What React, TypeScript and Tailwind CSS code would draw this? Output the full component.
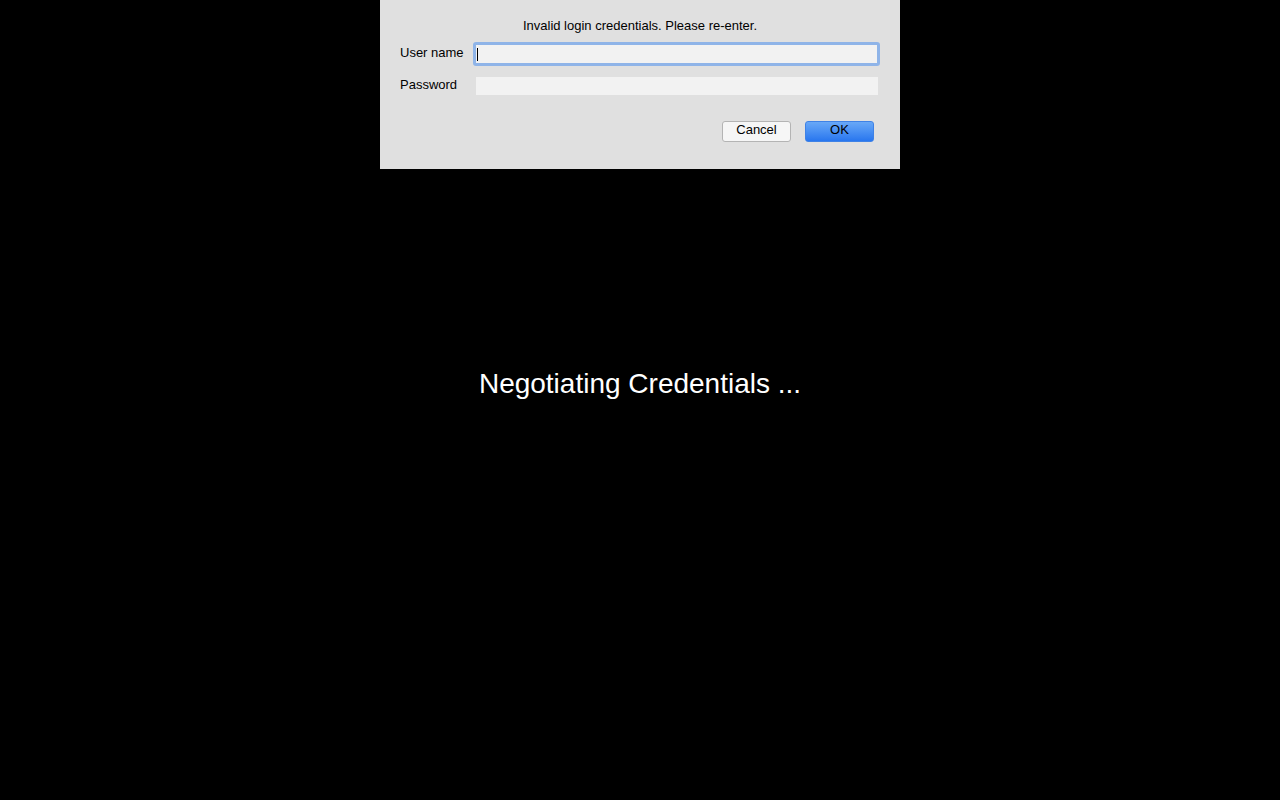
export default function App() {
  return (
    <div className="w-[1280px] h-[800px] bg-black overflow-hidden font-['Liberation_Sans',Arial,sans-serif]">
      <div className="mx-auto w-[520px] h-[169px] bg-[#e0e0e0] px-[20px] pt-[18px] text-[13px] leading-[16px] text-black">
        <p className="text-center h-[16px]">Invalid login credentials. Please re-enter.</p>
        <div className="flex mt-[8px] h-[24px]">
          <span className="w-[73px] mt-[3px]">User name</span>
          <div className="w-[407px] h-[24px] border-[3px] border-[#8fb4e8] rounded-[3px] bg-[#f2f2f2] flex items-center pl-[1px]">
            <div className="w-px h-[13px] bg-black" />
          </div>
        </div>
        <div className="flex mt-[10px] h-[19px]">
          <span className="w-[76px] mt-[1px]">Password</span>
          <div className="w-[402px] h-[18px] mt-[1px] bg-[#f2f2f2]" />
        </div>
        <div className="flex justify-end gap-[14px] mt-[26px] pr-[6px]">
          <button className="w-[69px] h-[21px] rounded-[3px] border border-[#b4b4b4] bg-[#f6f6f6] text-[13px] leading-[15px] text-black flex items-start justify-center">
            Cancel
          </button>
          <button className="w-[69px] h-[21px] rounded-[3px] border border-[#3f82e6] bg-gradient-to-b from-[#68a8f7] to-[#2876ee] text-[13px] leading-[15px] text-black flex items-start justify-center">
            OK
          </button>
        </div>
      </div>
      <p className="mt-[199px] text-center text-white text-[28px] leading-[32px]">Negotiating Credentials ...</p>
    </div>
  );
}
